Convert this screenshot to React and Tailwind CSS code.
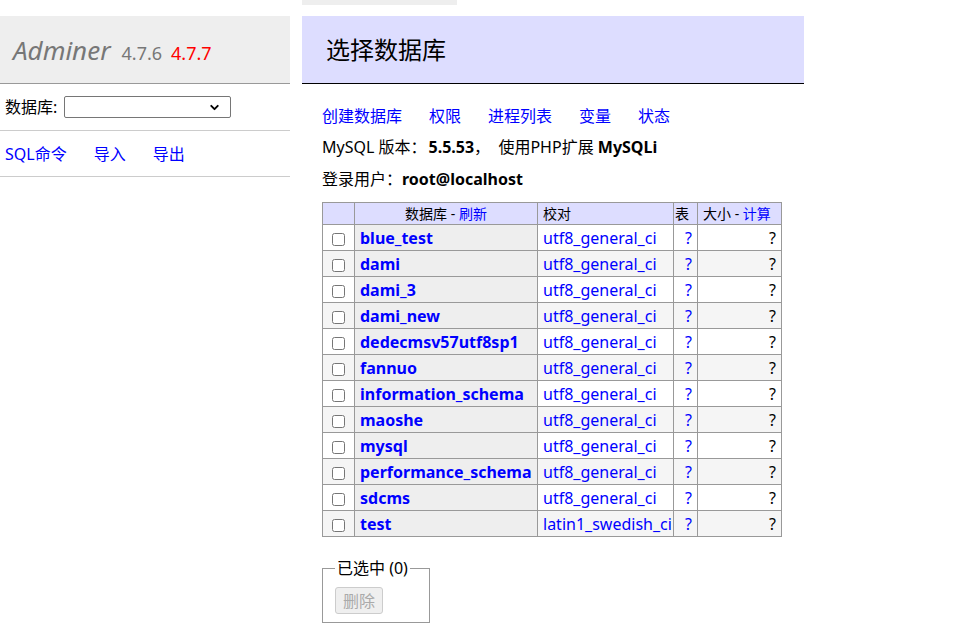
import { ChevronDown } from 'lucide-react';

const dbs = [
  ['blue_test', 'utf8_general_ci'],
  ['dami', 'utf8_general_ci'],
  ['dami_3', 'utf8_general_ci'],
  ['dami_new', 'utf8_general_ci'],
  ['dedecmsv57utf8sp1', 'utf8_general_ci'],
  ['fannuo', 'utf8_general_ci'],
  ['information_schema', 'utf8_general_ci'],
  ['maoshe', 'utf8_general_ci'],
  ['mysql', 'utf8_general_ci'],
  ['performance_schema', 'utf8_general_ci'],
  ['sdcms', 'utf8_general_ci'],
  ['test', 'latin1_swedish_ci'],
];

export default function App() {
  return (
    <div className="flex min-h-[627px] bg-white text-black text-[16px] leading-5 font-['Noto_Sans','Noto_Sans_CJK_SC',sans-serif]">
      {/* 左侧菜单 */}
      <aside className="w-[290px] shrink-0 pt-4">
        <div className="h-[68px] bg-[#eee] border-b border-[#999] flex items-center pl-[13px]">
          <div className="flex items-baseline">
            <span className="italic text-[26px] leading-8 text-[#777]">Adminer</span>
            <span className="ml-[11px] text-[18px] text-[#777]">4.7.6</span>
            <span className="ml-[9px] text-[18px] text-[#f00]">4.7.7</span>
          </div>
        </div>
        <div className="h-[47px] border-b border-[#ccc] flex items-center pl-[5px]">
          <span>数据库:</span>
          <div className="ml-[7px] relative w-[167px] h-[22px] border border-[#767676] rounded-[2px] bg-white">
            <ChevronDown size={13} strokeWidth={3.5} className="absolute right-[9px] top-[4px]" />
          </div>
        </div>
        <div className="h-[46px] border-b border-[#ccc] flex items-center pl-[5px] gap-[27px] text-[#00f]">
          <a href="#">SQL命令</a>
          <a href="#">导入</a>
          <a href="#">导出</a>
        </div>
      </aside>

      {/* 主内容 */}
      <main className="ml-3 w-[502px]">
        <div className="h-[5px] w-[155px] bg-[#eee]" />
        <div className="mt-[11px] h-[68px] bg-[#ddf] border-b border-black flex items-center pl-[24px] text-[24px] leading-8">
          选择数据库
        </div>

        <div className="px-5">
          <div className="mt-[22px] flex gap-[27px] text-[#00f]">
            <a href="#">创建数据库</a>
            <a href="#">权限</a>
            <a href="#">进程列表</a>
            <a href="#">变量</a>
            <a href="#">状态</a>
          </div>
          <p className="mt-[11px] whitespace-nowrap">
            MySQL 版本：<b className="ml-[2px]">5.5.53</b>，&nbsp; 使用PHP扩展 <b>MySQLi</b>
          </p>
          <p className="mt-[12px] whitespace-nowrap">
            登录用户：<b>root@localhost</b>
          </p>

          <table className="mt-[13px] border-collapse table-fixed w-[459px]">
            <colgroup>
              <col className="w-[32px]" />
              <col className="w-[183px]" />
              <col className="w-[136px]" />
              <col className="w-[24px]" />
              <col className="w-[84px]" />
            </colgroup>
            <thead>
              <tr className="h-[22px] bg-[#ddf] text-[14px] leading-[18px]">
                <td className="border border-[#999]"></td>
                <th className="border border-[#999] font-normal text-center px-[5px] whitespace-nowrap">
                  数据库 - <a href="#" className="text-[#00f]">刷新</a>
                </th>
                <td className="border border-[#999] px-[5px]">校对</td>
                <td className="border border-[#999] px-[1px]">表</td>
                <td className="border border-[#999] px-[5px] whitespace-nowrap">
                  大小 - <a href="#" className="text-[#00f]">计算</a>
                </td>
              </tr>
            </thead>
            <tbody>
              {dbs.map(([name, coll], i) => (
                <tr key={name} className={`h-[26px] ${i % 2 ? 'bg-[#f5f5f5]' : 'bg-white'}`}>
                  <td className="border border-[#999] text-center p-0">
                    <input type="checkbox" className="w-[13px] h-[13px] align-middle m-0" />
                  </td>
                  <th className="border border-[#999] bg-[#eee] text-left px-[5px] whitespace-nowrap overflow-visible">
                    <a href="#" className="text-[#00f] font-bold">{name}</a>
                  </th>
                  <td className="border border-[#999] px-[5px] whitespace-nowrap">
                    <a href="#" className="text-[#00f]">{coll}</a>
                  </td>
                  <td className="border border-[#999] px-[5px] text-right">
                    <a href="#" className="text-[#00f]">?</a>
                  </td>
                  <td className="border border-[#999] px-[5px] text-right">?</td>
                </tr>
              ))}
            </tbody>
          </table>

          <fieldset className="mt-[21px] w-[108px] border border-[#999] px-3 pb-2">
            <legend className="px-[2px]">已选中 (0)</legend>
            <button
              disabled
              className="mt-[9px] h-[27px] px-[7px] bg-[#efefef] border border-[#ccc] rounded-[3px] text-[#aaa]"
            >
              删除
            </button>
          </fieldset>
        </div>
      </main>
    </div>
  );
}
